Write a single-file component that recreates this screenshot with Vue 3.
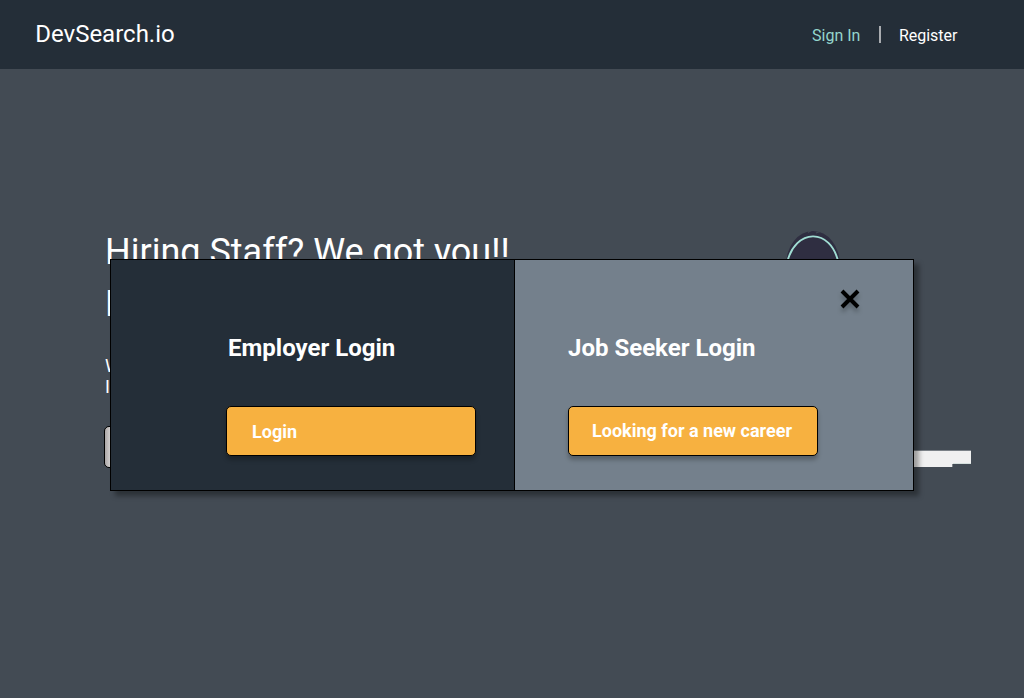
<script setup>
const panels = [
  { id: 'employer', title: 'Employer Login', action: 'Login' },
  { id: 'seeker', title: 'Job Seeker Login', action: 'Looking for a new career' },
]
</script>

<template>
  <div class="page">
    <header class="bar">
      <div class="brand">DevSearch.io</div>
      <nav class="nav">
        <a class="signin">Sign In</a>
        <span class="divider"></span>
        <a class="register">Register</a>
      </nav>
    </header>

    <main class="hero">
      <section class="copy">
        <h1>Hiring Staff? We got you!!<br />H</h1>
        <p>W<br />I</p>
        <div class="cta"></div>
      </section>
      <svg class="art" width="190" height="250" viewBox="0 0 190 250">
        <ellipse cx="32" cy="35" rx="27" ry="34" fill="#2f2e41" />
        <path d="M27 2.500l3-2M35 3l4-1.500" stroke="#434b54" stroke-width="1.200" />
        <path d="M6 33C14-2 50-3 57.500 33" fill="none" stroke="#a0ddd3" stroke-width="1.900" />
        <path d="M120 220H190V234H171V237H120Z" fill="#f0f0f0" />
        <path d="M120 220.500H190" stroke="#7b8187" />
        <path d="M171.500 237V234" stroke="#7b8187" />
        <path d="M172 233.500H190" stroke="#d5dfdd" />
      </svg>
    </main>

    <div class="modal">
      <section v-for="p in panels" :key="p.id" class="panel" :class="p.id">
        <h2>{{ p.title }}</h2>
        <button type="button"><span>{{ p.action }}</span></button>
      </section>
      <svg class="close" width="20" height="20" viewBox="0 0 20 20">
        <path d="M2 2L18 18M18 2L2 18" stroke="#000" stroke-width="4" />
      </svg>
    </div>
  </div>
</template>

<style>
body {
  overflow: hidden;
}
</style>

<style scoped>
.page {
  position: relative;
  height: 698px;
  overflow: hidden;
  background: #434b54;
  color: #fff;
  font-family: Roboto, sans-serif;
}
.bar {
  display: flex;
  justify-content: space-between;
  box-sizing: border-box;
  height: 69px;
  padding: 20px 66.5px 0 35.2px;
  background: #242e38;
}
.brand {
  font-size: 24px;
  line-height: 28px;
}
.nav {
  display: flex;
  font-size: 16px;
  line-height: 19px;
  padding-top: 6px;
}
.signin {
  color: #94d6cc;
}
.divider {
  width: 2px;
  height: 17px;
  margin: 0 17.5px 0 19px;
  background: #a9acb0;
}
.hero {
  display: flex;
  justify-content: space-between;
  padding: 157px 53px 0 105px;
}
h1 {
  margin: 0;
  font-size: 36px;
  font-weight: 400;
  line-height: 52px;
}
.copy p {
  margin: 25px 0 29px;
  font-size: 18px;
  line-height: 21px;
}
.cta {
  box-sizing: border-box;
  width: 150px;
  height: 42px;
  margin-left: -1px;
  border: 1px solid #000;
  border-radius: 5px;
  background: linear-gradient(90deg, #aaa6a6, #d8d5d5 6px);
}
.art {
  display: block;
  margin-top: 4px;
}
.modal {
  position: absolute;
  left: 110px;
  top: 259px;
  display: flex;
  box-sizing: border-box;
  width: 804px;
  height: 232px;
  border: 1px solid #000;
  box-shadow: 5px 5px 5px rgba(0, 0, 0, 0.35);
}
.panel {
  box-sizing: border-box;
  padding-top: 74px;
}
.employer {
  width: 404px;
  border-right: 1px solid #000;
  padding-left: 115px;
  background: #242e38;
}
.seeker {
  flex: 1;
  padding-left: 53px;
  background: #74808c;
}
h2 {
  margin: 0 0 44px;
  font-size: 24px;
  font-weight: 700;
  line-height: 28px;
}
.employer h2 {
  padding-left: 2px;
}
button {
  display: block;
  box-sizing: border-box;
  width: 250px;
  height: 50px;
  padding: 0 0 0 23px;
  border: 1px solid #000;
  border-radius: 5px;
  background: #f7b140;
  box-shadow: 0 4px 4px rgba(0, 0, 0, 0.25);
  color: #fff;
  font-family: inherit;
  font-size: 18px;
  font-weight: 700;
  line-height: 48px;
  text-align: left;
}
.employer button {
  padding: 1px 0 0 25px;
}
.close {
  position: absolute;
  left: 729px;
  top: 29px;
  filter: drop-shadow(0 4px 2px rgba(0, 0, 0, 0.25));
}
</style>
